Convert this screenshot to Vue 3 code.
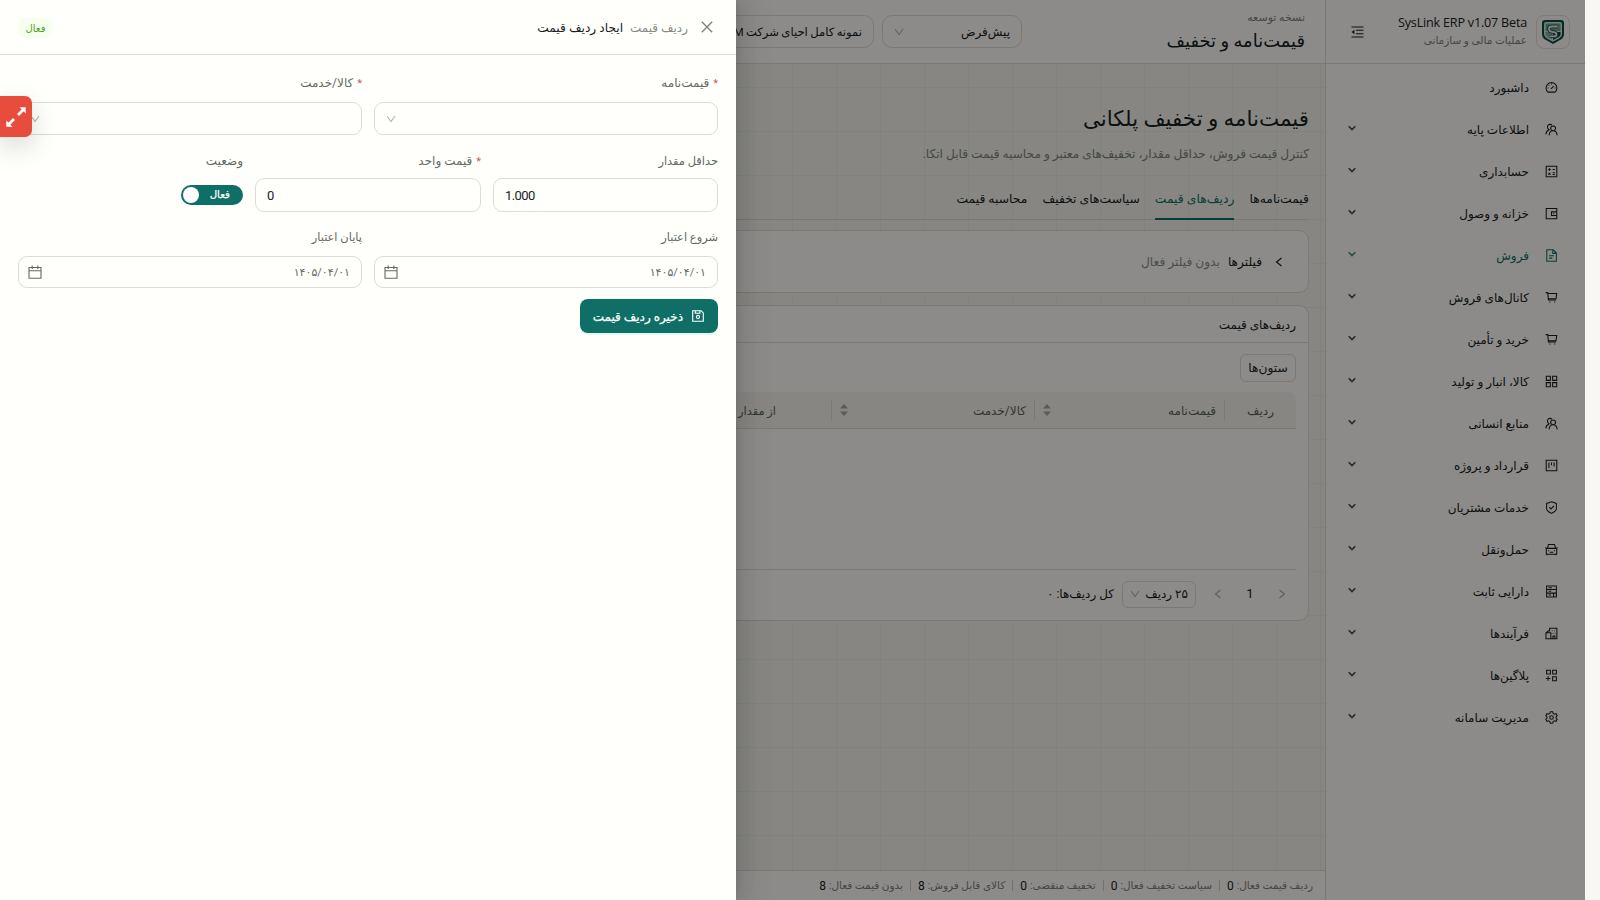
<script setup>
import { ref } from "vue";

const icons = {
  dashboard: "M3.600 13.700h8.800a6.700 6.700 0 1 0-8.800 0zM7.400 9.600l3.200-3.200M8 3.200v1.200M3.200 8.600h1.200M4.600 5l.8.8M11.700 8.600h1.200",
  team: "M5.600 8.200a3.300 3.300 0 1 1 3-5.600M1 14c.2-2.800 1.400-4.600 4-5.500M10 9.600a3 3 0 1 0 0-6 3 3 0 0 0 0 6zM5 15.200c.3-3.400 2.200-5.600 5-5.600s4.600 2.200 5 5.600",
  calculator: "M1.500 1.500h13v13h-13zM4 5.500h3M5.500 4v3M9.500 5.500h2.600M4.300 9.600l2.200 2.200M6.500 9.600l-2.200 2.200M9.500 9.600h2.600M9.500 11.800h2.600",
  wallet: "M1.500 1.800h13v12.600h-13zM14.500 6H8v4.400h6.500M10 8.200h1.400",
  file: "M2.200 1h7.800l4 4v10H2.200zM9.600 1.200v4.200h4.200M5 8.300h6M5 11.200h4",
  cart: "M.8 2h2.600l.8 9h9.400M3.600 3h10.800l-.8 6.600H4.200M5.200 13.600h1.400M11.200 13.600h1.400",
  grid: "M1.600 1.600h5v5h-5zM9.400 1.600h5v5h-5zM1.600 9.400h5v5h-5zM9.400 9.400h5v5h-5z",
  project: "M1.500 1.500h13v13h-13zM4.800 4.200v7M8 4.200v3.600M11.200 4.200v5",
  shield: "M8 1l6 2v6.400c0 2.600-3.200 4.400-6 5.800-2.800-1.400-6-3.200-6-5.800V3zM5.200 7.600l2.200 2.200 3.600-3.900",
  car: "M3 6.600l1.200-4.800h7.600L13 6.600M1.600 6.600h12.800v7.200H1.600zM.6 5.400l1.200 1.200M15.400 5.400l-1.200 1.200M4 9.400h1M11 9.400h1M5.800 11.400h4.400M2.600 14v1M13.400 14v1",
  asset: "M2 1.200h12v13.600H2zM2 5.600h12M2 10h12M4.400 3.500h4M4.400 7.800h3.200M10.600 10v4.800M4.400 12.400h3",
  process: "M5.600 5.400V1.600h9v12.800h-9M1.200 7h6v7.400h-6zM1.600 6.800l4-3M8.400 4.600h.9M11.200 4.600h.9M9.600 7.600h.9M12 7.600h.9M9.800 14.200v-3h2.400v3",
  plugin: "M2 1.600h4.600v4.600H2zM9.400 1.600H14v4.600H9.400zM9.400 9.600H14v4.800H9.400zM1 11.800h5.600M3.800 9v5.600",
  gear: "M6.600 1h2.800l.6 2 1.600.9 2-.6 1.400 2.500L13.600 7.200v1.600l1.400 1.400-1.400 2.500-2-.6-1.600.9-.6 2H6.600l-.6-2-1.600-.9-2 .6L1 10.200l1.400-1.400V7.200L1 5.800l1.400-2.500 2 .6L6 3zM8 5.800a2.200 2.200 0 1 0 0 4.400 2.200 2.200 0 0 0 0-4.400z",
};

const menu = [
  { icon: "dashboard", label: "داشبورد", leaf: true },
  { icon: "team", label: "اطلاعات پایه" },
  { icon: "calculator", label: "حسابداری" },
  { icon: "wallet", label: "خزانه و وصول" },
  { icon: "file", label: "فروش", active: true },
  { icon: "cart", label: "کانال‌های فروش" },
  { icon: "cart", label: "خرید و تأمین" },
  { icon: "grid", label: "کالا، انبار و تولید" },
  { icon: "team", label: "منابع انسانی" },
  { icon: "project", label: "قرارداد و پروژه" },
  { icon: "shield", label: "خدمات مشتریان" },
  { icon: "car", label: "حمل‌ونقل" },
  { icon: "asset", label: "دارایی ثابت" },
  { icon: "process", label: "فرآیندها" },
  { icon: "plugin", label: "پلاگین‌ها" },
  { icon: "gear", label: "مدیریت سامانه" },
];

const tabs = ["قیمت‌نامه‌ها", "ردیف‌های قیمت", "سیاست‌های تخفیف", "محاسبه قیمت"];
const activeTab = ref(1);

const stats = [
  { label: "ردیف قیمت فعال:", value: 0 },
  { label: "سیاست تخفیف فعال:", value: 0 },
  { label: "تخفیف منقضی:", value: 0 },
  { label: "کالای قابل فروش:", value: 8 },
  { label: "بدون قیمت فعال:", value: 8 },
];

const minQty = ref("1.000");
const unitPrice = ref("0");
const enabled = ref(true);
</script>

<template>
  <div class="page" dir="rtl">
    <div class="shell">
      <aside class="sidebar">
        <div class="brand">
          <div class="logo">
            <svg viewBox="0 0 24 26" width="24" height="26">
              <path d="M4 1h16q3 0 3 3v11q0 4-4 6l-7 4-7-4q-4-2-4-6V4q0-3 3-3z" fill="#0a4f47" />
              <path d="M5 3h14q2 0 2 2v10q0 2.800-2.600 4.200L12 22.800l-6.400-3.600Q3 17.800 3 15V5q0-2 2-2z" fill="#d7e6df" />
              <path d="M5.500 4.500h13q1 0 1 1v6.500h-15V5.500q0-1 1-1z" fill="#6fa08b" />
              <path d="M4.500 13H11v7.500l-4.500-2.600q-2-1-2-3z" fill="#87b09d" />
              <path d="M12 13h7.500v2q0 2-2 3.100L12 21z" fill="#25343b" />
              <path d="M16.500 7.500H11q-3 0-3 2.500t3 2.800l2 .3q2.500.4 2.500 2.300t-2.500 2H8.500" fill="none" stroke="#0a4f47" stroke-width="3.400" />
              <path d="M16.500 7.500H11q-3 0-3 2.500t3 2.800l2 .3q2.500.4 2.500 2.300t-2.500 2H8.500" fill="none" stroke="#e9f2ec" stroke-width="1.800" />
            </svg>
          </div>
          <div class="brand-text">
            <div class="brand-name" dir="ltr">SysLink ERP v1.07 Beta</div>
            <div class="brand-sub">عملیات مالی و سازمانی</div>
          </div>
          <svg class="fold" viewBox="0 0 13 12" width="13" height="12">
            <path d="M.5 1h12M5 4.300h7.500M5 7.700h7.500M.5 11h12" fill="none" stroke="currentColor" stroke-width="1.100" />
            <path d="M3.400 3.800v4.400L.6 6z" fill="currentColor" />
          </svg>
        </div>
        <nav class="menu">
          <div v-for="item in menu" :key="item.label" class="menu-item" :class="{ active: item.active }">
            <svg class="menu-icon" viewBox="0 0 16 16"><path :d="icons[item.icon]" /></svg>
            <span class="menu-label">{{ item.label }}</span>
            <svg v-if="!item.leaf" class="menu-arrow" viewBox="0 0 8 6"><path d="M.7 1.200L4 4.500l3.300-3.300" /></svg>
          </div>
        </nav>
      </aside>

      <div class="main">
        <header class="topbar">
          <div class="heading">
            <div class="eyebrow">نسخه توسعه</div>
            <div class="heading-title">قیمت‌نامه و تخفیف</div>
          </div>
          <div class="topbar-select small">
            <span>پیش‌فرض</span>
            <svg class="down" viewBox="0 0 10 8"><path d="M1 1l4 5.500L9 1" /></svg>
          </div>
          <div class="topbar-select large"><span>نمونه کامل احیای شرکت M</span></div>
        </header>

        <main class="content">
          <h1>قیمت‌نامه و تخفیف پلکانی</h1>
          <p class="intro">کنترل قیمت فروش، حداقل مقدار، تخفیف‌های معتبر و محاسبه قیمت قابل اتکا.</p>
          <div class="tabs">
            <div v-for="(tab, i) in tabs" :key="tab" class="tab" :class="{ active: i === activeTab }">{{ tab }}</div>
          </div>

          <section class="card filters">
            <svg class="collapse" viewBox="0 0 8 10"><path d="M6.500 1L1.500 5l5 4" /></svg>
            <span class="filters-title">فیلترها</span>
            <span class="filters-note">بدون فیلتر فعال</span>
          </section>

          <section class="card list">
            <div class="card-head">ردیف‌های قیمت</div>
            <div class="card-body">
              <button class="columns-btn">ستون‌ها</button>
              <div class="table-head">
                <div class="th index"><span>ردیف</span></div>
                <div class="th sortable pricelist">
                  <span>قیمت‌نامه</span>
                  <svg class="sorter" viewBox="0 0 8 12"><path d="M4 0l4 4.500H0zM4 12l4-4.500H0z" /></svg>
                </div>
                <div class="th sortable product">
                  <span>کالا/خدمت</span>
                  <svg class="sorter" viewBox="0 0 8 12"><path d="M4 0l4 4.500H0zM4 12l4-4.500H0z" /></svg>
                </div>
                <div class="th from"><span>از مقدار</span></div>
              </div>
              <div class="table-empty"></div>
              <div class="pagination">
                <svg class="page-arrow" viewBox="0 0 8 10"><path d="M1.500 1l5 4-5 4" /></svg>
                <span class="page-no">1</span>
                <svg class="page-arrow" viewBox="0 0 8 10"><path d="M6.500 1l-5 4 5 4" /></svg>
                <div class="page-size">
                  <span>۲۵ ردیف</span>
                  <svg class="down" viewBox="0 0 10 8"><path d="M1 1l4 5.500L9 1" /></svg>
                </div>
                <span class="total">کل ردیف‌ها: ۰</span>
              </div>
            </div>
          </section>
        </main>

        <footer class="statusbar">
          <div v-for="s in stats" :key="s.label" class="stat">
            <span>{{ s.label }}</span> <b>{{ s.value }}</b>
          </div>
        </footer>
      </div>
    </div>

    <div class="mask"></div>

    <div class="drawer">
      <div class="drawer-head">
        <svg class="close" viewBox="0 0 12 12"><path d="M.8.8l10.400 10.400M11.200.8L.8 11.200" /></svg>
        <span class="drawer-kind">ردیف قیمت</span>
        <span class="drawer-title">ایجاد ردیف قیمت</span>
        <span class="tag">فعال</span>
      </div>
      <form class="form">
        <div class="row halves">
          <div class="field">
            <label><i>*</i>قیمت‌نامه</label>
            <div class="control select"><svg class="down" viewBox="0 0 10 8"><path d="M1 1l4 5.500L9 1" /></svg></div>
          </div>
          <div class="field">
            <label><i>*</i>کالا/خدمت</label>
            <div class="control select"><svg class="down" viewBox="0 0 10 8"><path d="M1 1l4 5.500L9 1" /></svg></div>
          </div>
        </div>
        <div class="row thirds">
          <div class="field">
            <label class="tight">حداقل مقدار</label>
            <div class="control number" dir="ltr">{{ minQty }}</div>
          </div>
          <div class="field">
            <label><i>*</i>قیمت واحد</label>
            <div class="control number" dir="ltr">{{ unitPrice }}</div>
          </div>
          <div class="field">
            <label>وضعیت</label>
            <div class="switch" :class="{ on: enabled }"><span>فعال</span><em></em></div>
          </div>
        </div>
        <div class="row halves dates">
          <div v-for="label in ['شروع اعتبار', 'پایان اعتبار']" :key="label" class="field">
            <label class="tight">{{ label }}</label>
            <div class="control date">
              <span>۱۴۰۵/۰۴/۰۱</span>
              <svg viewBox="0 0 14 14" width="14" height="14"><path d="M1 2.500h12v10.800H1zM1 5.800h12M4.200.5v3.500M9.800.5v3.500" /></svg>
            </div>
          </div>
        </div>
        <button type="button" class="save">
          <svg viewBox="0 0 12 12" width="12" height="12"><path d="M.7.7h8.400l2.200 2.200v8.400H.7zM3.300.9v2.300h4.600V.9M6 5.400a1.600 1.600 0 1 0 0 3.200 1.600 1.600 0 0 0 0-3.200z" /></svg>
          <span>ذخیره ردیف قیمت</span>
        </button>
      </form>
    </div>

    <div class="expand">
      <svg viewBox="0 0 20 20" width="20" height="20">
        <path d="M12 8l5-5M8 12l-5 5" stroke="#fff" stroke-width="2.800" />
        <path d="M13.500 .3h6.200v6.200zM.3 13.500v6.200h6.200z" fill="#fff" />
      </svg>
    </div>
  </div>
</template>

<style>
body {
  margin: 0;
  background: #f8f7f3;
}
</style>

<style scoped>
* {
  box-sizing: border-box;
}

.page {
  position: relative;
  width: 1585px;
  height: 900px;
  overflow: hidden;
  font-family: Roboto, "DejaVu Sans", sans-serif;
  font-size: 12px;
  line-height: 20px;
  color: #17211f;
  white-space: nowrap;
}

svg {
  flex: none;
  fill: none;
  stroke: none;
}

.shell {
  display: flex;
  height: 900px;
}

.sidebar {
  width: 260px;
  background: #fffdf9;
  border-left: 1px solid #dedcd4;
}

.brand {
  display: flex;
  align-items: center;
  height: 64px;
  padding: 0 15px 0 25px;
  border-bottom: 1px solid #dedcd4;
}

.logo {
  display: flex;
  align-items: center;
  justify-content: center;
  width: 34px;
  height: 34px;
  border: 1px solid #e6e1d8;
  border-radius: 8px;
}

.brand-text {
  margin-right: 9px;
}

.brand-name {
  font: 12.6px/19px "Open Sans", "Noto Sans", sans-serif;
  letter-spacing: -0.2px;
}

.brand-sub {
  font-size: 10.5px;
  line-height: 18px;
  color: #7c827d;
}

.fold {
  margin-right: auto;
}

.menu {
  padding-top: 3px;
}

.menu-item {
  display: flex;
  align-items: center;
  height: 42px;
  padding: 0 27px 0 22px;
}

.menu-item.active {
  color: #0f6f66;
}

.menu-icon {
  width: 13px;
  height: 13px;
  margin-bottom: 1px;
}

.menu-icon path {
  stroke: currentColor;
  stroke-width: 1.3;
}

.menu-label {
  margin-right: 16px;
}

.menu-arrow {
  width: 8px;
  height: 6px;
  margin-right: auto;
  margin-bottom: 4px;
  opacity: 0.8;
}

.menu-arrow path {
  stroke: currentColor;
  stroke-width: 1.6;
}

.main {
  display: flex;
  flex: 1;
  flex-direction: column;
  background-color: #f6f5ee;
  background-image: linear-gradient(rgba(15, 60, 50, 0.04) 1px, transparent 1px),
    linear-gradient(90deg, rgba(15, 60, 50, 0.04) 1px, transparent 1px);
  background-size: 44px 44px;
  background-position: 0 -1px;
}

.topbar {
  display: flex;
  align-items: center;
  height: 64px;
  padding-right: 20px;
  background: #fffdf9;
  border-bottom: 1px solid #dedcd4;
}

.heading {
  width: 263px;
  margin-left: 20px;
  padding-top: 3px;
}

.eyebrow {
  font-size: 11px;
  line-height: 16px;
  color: #7c827d;
}

.heading-title {
  font-size: 17.9px;
  line-height: 30px;
}

.topbar-select {
  display: flex;
  align-items: center;
  justify-content: space-between;
  height: 33px;
  padding: 0 11px;
  border: 1px solid #dedcd4;
  border-radius: 10px;
}

.topbar-select.small {
  width: 140px;
}

.topbar-select.large {
  width: 260px;
  margin-right: 8px;
  font-size: 11.6px;
  word-spacing: -0.5px;
}

.down {
  width: 10px;
  height: 8px;
}

.down path {
  stroke: #b3b4ae;
  stroke-width: 1.1;
}

.content {
  flex: 1;
  padding: 35px 16px 0 0;
}

h1 {
  margin: 0;
  font-size: 21.4px;
  font-weight: 400;
  line-height: 40px;
}

.intro {
  margin: 5px 0 0;
  font-size: 12.15px;
  line-height: 20px;
  color: #7c827d;
}

.tabs {
  display: flex;
  gap: 15px;
  height: 36px;
  margin-top: 20px;
  font-size: 12.35px;
  border-bottom: 1px solid #dedcd4;
}

.tab {
  height: 36px;
  line-height: 31px;
}

.tab.active {
  color: #0f6f66;
  border-bottom: 2px solid #0f6f66;
}

.card {
  background: #fffdf9;
  border: 1px solid #dedcd4;
  border-radius: 10px;
}

.filters {
  display: flex;
  align-items: center;
  height: 63px;
  margin-top: 10px;
  padding-right: 25px;
  font-size: 12.2px;
}

.collapse {
  width: 8px;
  height: 10px;
}

.collapse path {
  stroke: currentColor;
  stroke-width: 1.2;
}

.filters-title {
  margin-right: 13px;
}

.filters-note {
  margin-right: 8px;
  color: #8d908a;
}

.list {
  height: 316px;
  margin-top: 12px;
}

.card-head {
  height: 37px;
  padding-right: 12px;
  line-height: 39px;
  border-bottom: 1px solid #dedcd4;
}

.card-body {
  padding: 11px 12px 0 0;
}

button {
  font: inherit;
  white-space: nowrap;
}

.columns-btn {
  display: block;
  width: 56px;
  height: 28px;
  padding: 0;
  font-size: 12.3px;
  color: inherit;
  background: none;
  border: 1px solid #dedcd4;
  border-radius: 6px;
}

.table-head {
  display: flex;
  align-items: center;
  height: 37px;
  margin-top: 10px;
  color: #59625e;
  background: #f7f5ee;
  border-bottom: 1px solid #dedcd4;
  border-top-right-radius: 8px;
}

.th {
  display: flex;
  align-items: center;
  height: 20px;
  padding: 0 8px;
  border-left: 1px solid #dedcd4;
}

.th span {
  padding-top: 2px;
}

.sortable {
  justify-content: space-between;
}

.index {
  justify-content: center;
  width: 72px;
}

.pricelist {
  width: 190px;
}

.product {
  width: 203px;
}

.from {
  width: 200px;
  padding-right: 55px;
  font-size: 11.4px;
}

.sorter {
  width: 8px;
  height: 12px;
}

.sorter path {
  fill: #a5a69f;
}

.table-empty {
  height: 141px;
  border-bottom: 1px solid #dedcd4;
}

.pagination {
  display: flex;
  align-items: center;
  height: 48px;
  padding-right: 10px;
}

.page-arrow {
  width: 8px;
  height: 10px;
}

.page-arrow path {
  stroke: #a9aaa4;
  stroke-width: 1.1;
}

.page-no {
  width: 56px;
  font-size: 13px;
  text-align: center;
}

.page-size {
  display: flex;
  align-items: center;
  justify-content: space-between;
  width: 74px;
  height: 27px;
  margin-right: 18px;
  padding: 0 7px;
  border: 1px solid #dedcd4;
  border-radius: 6px;
}

.total {
  margin-right: 8px;
}

.statusbar {
  display: flex;
  height: 30px;
  padding-right: 12px;
  align-items: center;
  font-size: 10.45px;
  color: #7c827d;
  background: #fffdf9;
  border-top: 1px solid #dedcd4;
}

.stat {
  display: flex;
  align-items: center;
  gap: 3px;
}

.stat + .stat::before {
  width: 1px;
  height: 11px;
  margin: 0 4px 0 4px;
  margin-right: 7px;
  content: "";
  background: #cfcec7;
}

.stat b {
  font-size: 12px;
  font-weight: 400;
  color: #17211f;
}

.mask {
  position: absolute;
  inset: 0;
  background: rgba(0, 0, 0, 0.45);
}

.drawer {
  position: absolute;
  top: 0;
  bottom: 0;
  left: 0;
  width: 736px;
  background: #fffffc;
  box-shadow: 6px 0 16px rgba(0, 0, 0, 0.08), 3px 0 6px -4px rgba(0, 0, 0, 0.12), 9px 0 28px 8px rgba(0, 0, 0, 0.05);
}

.drawer-head {
  display: flex;
  align-items: center;
  height: 55px;
  padding: 2px 23px 0 18px;
  border-bottom: 1px solid #dedcd8;
}

.close {
  width: 12px;
  height: 12px;
  margin-bottom: 2px;
}

.close path {
  stroke: #7c807b;
  stroke-width: 1.3;
}

.drawer-kind {
  margin-right: 13px;
  color: #858a85;
}

.drawer-title {
  margin-right: 7px;
  font-size: 12.2px;
}

.tag {
  width: 35px;
  height: 20px;
  margin-right: auto;
  font-size: 10px;
  line-height: 21px;
  text-align: center;
  color: #4ea32a;
  background: #f5ffed;
  border-radius: 8px;
}

.form {
  padding: 18px 18px 0;
}

.row {
  display: grid;
  gap: 12px;
}

.halves {
  grid-template-columns: 344px 344px;
}

.thirds {
  grid-template-columns: 225px 226px 62px;
  margin-top: 15px;
}

.dates {
  margin-top: 15px;
}

label {
  display: block;
  height: 20px;
  line-height: 21px;
  color: #626965;
}

.thirds label {
  line-height: 22px;
}

label.tight {
  font-size: 11.4px;
}

label i {
  margin-left: 4px;
  font-size: 11px;
  font-style: normal;
  color: #c0605a;
}

.control {
  display: flex;
  align-items: center;
  height: 33px;
  margin-top: 9px;
  padding: 0 11px;
  border: 1px solid #dedcd8;
  border-radius: 9px;
}

.select {
  justify-content: flex-end;
}

.thirds .control {
  height: 34px;
  margin-top: 8px;
}

.number {
  padding-top: 2px;
  font-size: 13px;
  letter-spacing: -0.6px;
}

.switch {
  display: flex;
  align-items: center;
  justify-content: space-between;
  height: 20px;
  margin-top: 15px;
  padding: 0 13px 0 2px;
  font-size: 10.2px;
  line-height: 22px;
  color: #fff;
  background: #aaa;
  border-radius: 10px;
}

.switch.on {
  background: #0f6f66;
}

.switch span {
  -webkit-text-stroke: 0.25px currentColor;
}

.switch em {
  width: 16px;
  height: 16px;
  background: #fff;
  border-radius: 50%;
}

.dates .control {
  justify-content: space-between;
  height: 32px;
  margin-top: 9px;
  padding-left: 9px;
  color: #626965;
}

.date span {
  padding-top: 2px;
  font-size: 11px;
}

.date path {
  stroke: currentColor;
  stroke-width: 1.1;
}

.save {
  display: flex;
  align-items: center;
  gap: 9px;
  width: 138px;
  height: 34px;
  margin-top: 11px;
  padding: 0 14px;
  color: #fff;
  background: #0f6f66;
  border: 0;
  border-radius: 8px;
  box-shadow: 0 2px 0 rgba(5, 200, 170, 0.12);
}

.save span {
  padding-top: 2px;
  -webkit-text-stroke: 0.25px currentColor;
}

.save path {
  stroke: currentColor;
  stroke-width: 1.1;
}

.expand {
  position: absolute;
  top: 96px;
  left: 0;
  display: flex;
  align-items: center;
  justify-content: center;
  width: 32px;
  height: 41px;
  padding-right: 1px;
  background: #e74c3c;
  border-radius: 0 7px 7px 0;
  box-shadow: 0 10px 28px rgba(0, 0, 0, 0.16);
}
</style>
